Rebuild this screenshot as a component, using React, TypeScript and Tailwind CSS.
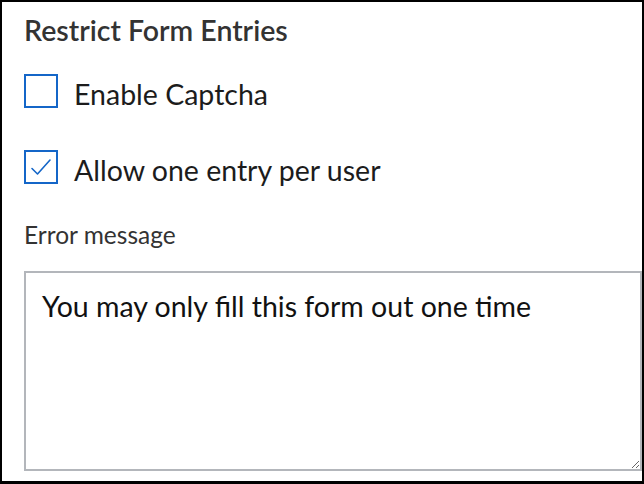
import React, { useState } from 'react';

const Check = ({ checked, onToggle }: { checked: boolean; onToggle: () => void }) => (
  <button
    type="button"
    onClick={onToggle}
    className="w-[34px] h-[34px] shrink-0 border-2 border-[#1466c8] bg-white flex items-center justify-center"
  >
    {checked && (
      <svg width="24" height="24" viewBox="0 0 24 24" fill="none">
        <path d="M3 13.5l5.5 5.5L21 5" stroke="#1466c8" strokeWidth="1.6" strokeLinecap="round" strokeLinejoin="round" />
      </svg>
    )}
  </button>
);

export default function App() {
  const [captcha, setCaptcha] = useState(false);
  const [oneEntry, setOneEntry] = useState(true);

  return (
    <div className="w-[644px] h-[484px] bg-white border-2 border-b-[3px] border-black pl-[22px] pt-[12px] font-['Lato','Noto_Sans',sans-serif]">
      <h2 className="text-[28.5px] leading-[32px] font-semibold text-[#333]">Restrict Form Entries</h2>

      <label className="mt-[28px] flex items-start gap-[16px] cursor-pointer">
        <Check checked={captcha} onToggle={() => setCaptcha(c => !c)} />
        <span className="pt-[3px] text-[28.5px] leading-[34px] text-[#1c1c1c]">Enable Captcha</span>
      </label>

      <label className="mt-[39px] flex items-start gap-[16px] cursor-pointer">
        <Check checked={oneEntry} onToggle={() => setOneEntry(c => !c)} />
        <span className="pt-[3px] text-[28.5px] leading-[34px] text-[#1c1c1c]">Allow one entry per user</span>
      </label>

      <div className="mt-[34px] text-[24.5px] leading-[28px] text-[#333]">Error message</div>

      <textarea
        defaultValue="You may only fill this form out one time"
        className="mt-[22px] block w-full h-[200px] border-2 border-[#b3b6bb] px-[16px] pt-[16px] text-[28.5px] leading-[34px] text-[#111] font-['Lato',sans-serif] outline-none resize"
      />
    </div>
  );
}
